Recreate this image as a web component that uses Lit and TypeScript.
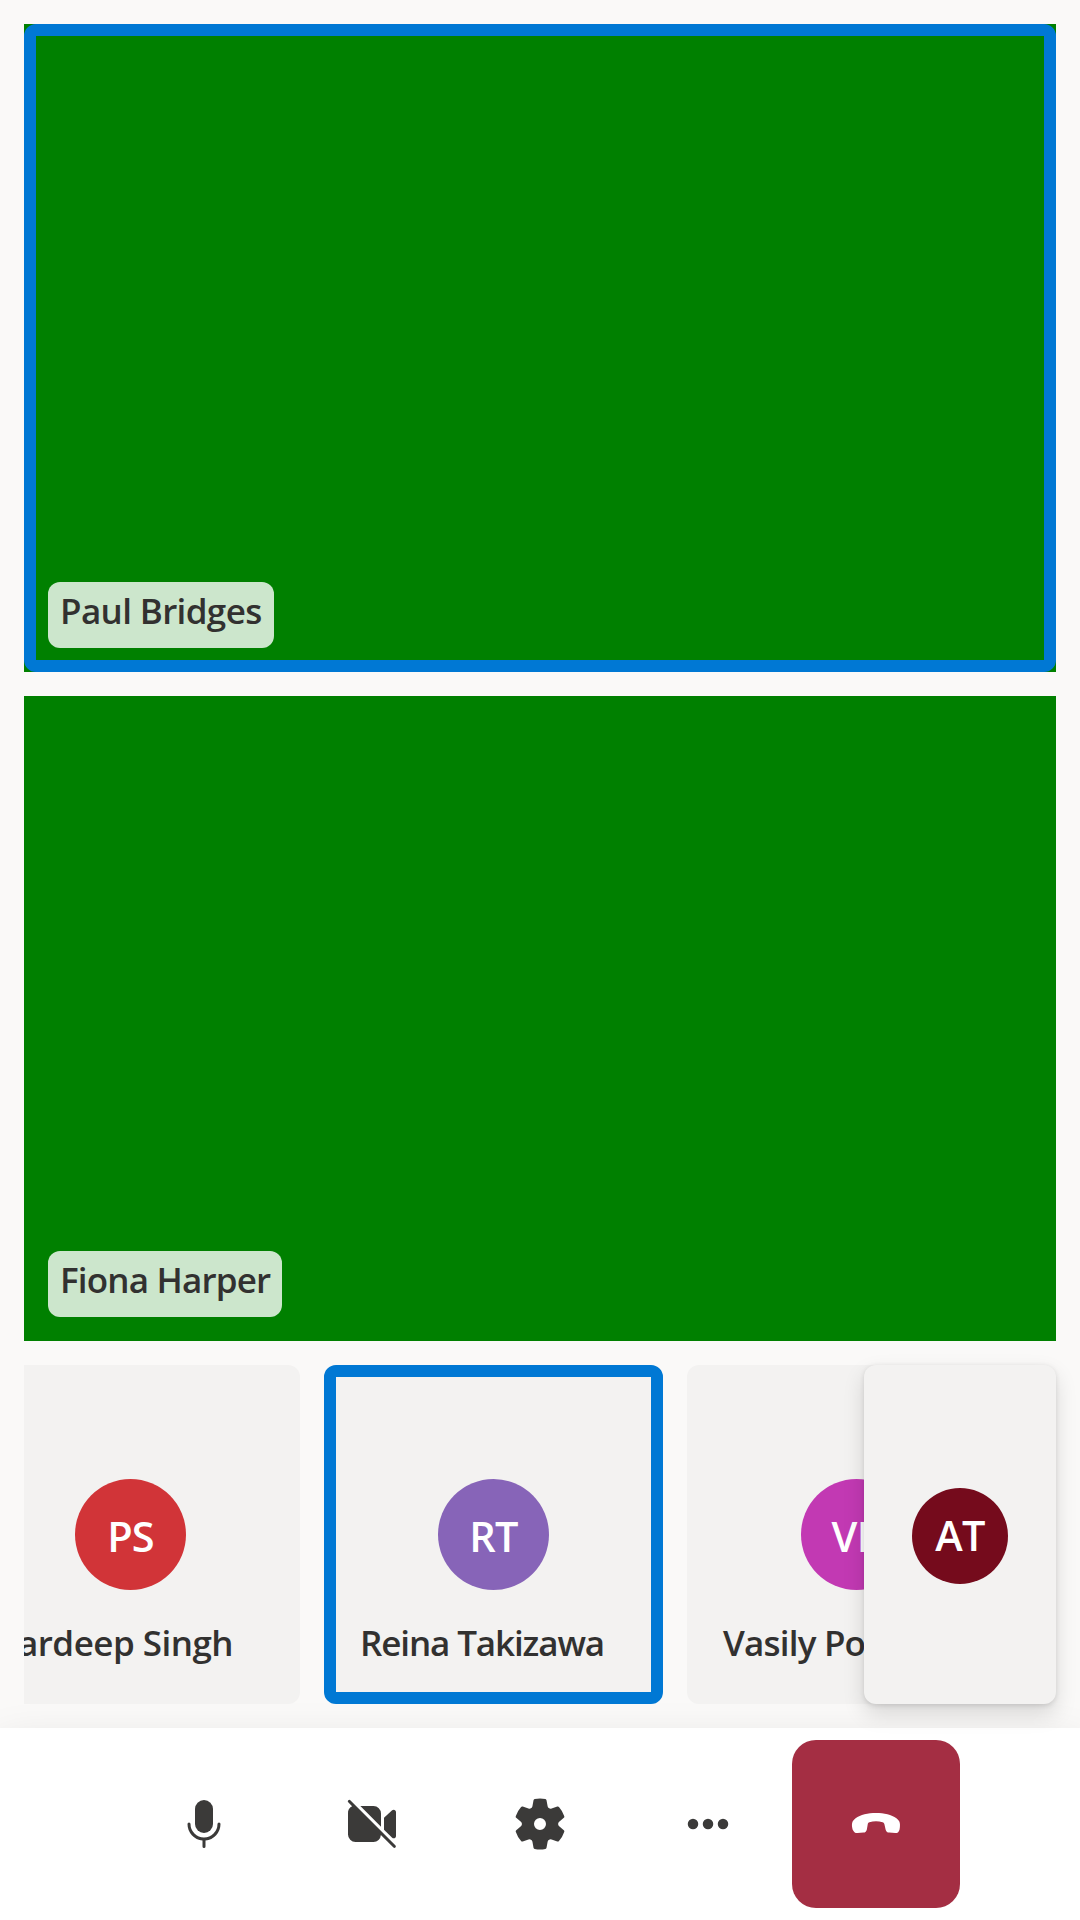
import { LitElement, html, css, svg, nothing } from "lit";
import { customElement, property } from "lit/decorators.js";
import { classMap } from "lit/directives/class-map.js";
import { styleMap } from "lit/directives/style-map.js";

const icons = {
  mic: svg`<path d="M10 13a3 3 0 0 0 3-3V5a3 3 0 0 0-6 0v5a3 3 0 0 0 3 3Z"/><path d="M5.5 10a.5.5 0 0 0-1 0 5.5 5.5 0 0 0 5 5.48v2.02a.5.5 0 0 0 1 0v-2.02a5.5 5.5 0 0 0 5-5.48.5.5 0 0 0-1 0 4.5 4.5 0 1 1-9 0Z"/>`,
  videoOff: svg`<path d="M2.85 2.15a.5.5 0 1 0-.7.7l1.22 1.22A2.5 2.5 0 0 0 2 6.5v7A2.5 2.5 0 0 0 4.5 16h6a2.5 2.5 0 0 0 2.46-2.33l4.19 4.18a.5.5 0 0 0 .7-.7l-15-15Z"/><path d="M13 6.5v4.38L6.12 4h4.38A2.5 2.5 0 0 1 13 6.5Z"/><path d="M14 7.93v3.95l2.72 2.72c.5.42 1.28.1 1.28-.6V6.02c0-.66-.74-1.03-1.28-.6L14 7.93Z"/>`,
  settings: svg`<path d="M1.91 7.38A8.5 8.5 0 0 1 3.7 4.3a.5.5 0 0 1 .54-.13l1.92.68a1 1 0 0 0 1.32-.76l.36-2a.5.5 0 0 1 .4-.4 8.53 8.53 0 0 1 3.55 0c.2.04.35.2.38.4l.37 2a1 1 0 0 0 1.32.76l1.92-.68a.5.5 0 0 1 .54.13 8.5 8.5 0 0 1 1.78 3.08c.06.2 0 .4-.15.54l-1.56 1.32a1 1 0 0 0 0 1.52l1.56 1.32a.5.5 0 0 1 .15.54 8.5 8.5 0 0 1-1.78 3.08.5.5 0 0 1-.54.13l-1.92-.68a1 1 0 0 0-1.32.76l-.37 2a.5.5 0 0 1-.38.4 8.53 8.53 0 0 1-3.56 0 .5.5 0 0 1-.39-.4l-.36-2a1 1 0 0 0-1.32-.76l-1.92.68a.5.5 0 0 1-.54-.13 8.5 8.5 0 0 1-1.78-3.08.5.5 0 0 1 .15-.54l1.56-1.32a1 1 0 0 0 0-1.52L2.06 7.92a.5.5 0 0 1-.15-.54ZM8 10a2 2 0 1 0 4 0 2 2 0 0 0-4 0Z"/>`,
  more: svg`<circle cx="5" cy="10" r="1.75"/><circle cx="10" cy="10" r="1.75"/><circle cx="15" cy="10" r="1.75"/>`,
  callEnd: svg`<path d="M2.04 11.1C1.9 9.6 2.1 9 3.2 8.1 4.8 6.95 7.3 6.33 10 6.33S15.2 6.95 16.8 8.1C17.9 9 18.1 9.6 17.96 11.1L17.85 11.8C17.65 12.65 17.2 13.05 16.4 13L14.4 12.85C13.7 12.8 13.35 12.5 13.2 11.8L12.8 10.1C12.7 9.75 12.55 9.6 12.2 9.45C11.5 9.2 10.75 9.1 10 9.1S8.5 9.2 7.8 9.45C7.45 9.6 7.3 9.75 7.25 10.1L6.95 11.8C6.8 12.5 6.45 12.8 5.8 12.85L3.85 13C3.05 13.05 2.6 12.65 2.2 11.8Z"/>`,
};

type IconName = keyof typeof icons;

interface Person {
  name: string;
  initials: string;
  tone: string;
  tracking?: number;
  speaking?: boolean;
}

const FONT = css`"Segoe UI", "Open Sans", "Noto Sans", sans-serif`;

@customElement("name-label")
class NameLabel extends LitElement {
  @property({ type: Boolean, reflect: true }) tinted = false;
  @property({ type: Number }) tracking = -0.8;

  static styles = css`
    :host {
      display: block;
      box-sizing: border-box;
      height: 66px;
      padding: 0 12px;
      border-radius: 12px;
      color: #323130;
      font: 600 35px/58px ${FONT};
      white-space: nowrap;
    }
    :host([tinted]) {
      background: rgba(255, 255, 255, 0.8);
    }
  `;

  render() {
    return html`<span style=${styleMap({ letterSpacing: `${this.tracking}px` })}><slot></slot></span>`;
  }
}

@customElement("video-tile")
class VideoTile extends LitElement {
  @property() name = "";
  @property({ type: Number }) tracking = -0.8;
  @property({ type: Boolean, reflect: true }) speaking = false;

  static styles = css`
    :host {
      display: flex;
      align-items: flex-end;
      box-sizing: border-box;
      padding: 24px;
      background: #008000;
      position: relative;
    }
    .ring {
      position: absolute;
      inset: 0;
      border: 12px solid #0078d4;
      border-radius: 12px;
    }
  `;

  render() {
    return html`
      ${this.speaking ? html`<div class="ring"></div>` : nothing}
      <name-label tinted .tracking=${this.tracking}>${this.name}</name-label>
    `;
  }
}

@customElement("person-tile")
class PersonTile extends LitElement {
  @property({ attribute: false }) person!: Person;
  @property({ type: Boolean, reflect: true }) compact = false;

  static styles = css`
    :host {
      display: block;
      flex: none;
      width: 339px;
      height: 339px;
    }
    :host([compact]) {
      width: 192px;
    }
    .tile {
      box-sizing: border-box;
      height: 100%;
      display: grid;
      grid-template-rows: 114px 111px 24px 66px;
      position: relative;
      border-radius: 12px;
      background: #f3f2f1;
    }
    .tile.compact {
      display: flex;
      align-items: center;
      justify-content: center;
      padding-top: 3px;
      box-shadow: 0 9.6px 21.6px rgba(0, 0, 0, 0.132),
        0 1.8px 5.4px rgba(0, 0, 0, 0.108);
    }
    .ring {
      position: absolute;
      inset: 0;
      border: 12px solid #0078d4;
      border-radius: 12px;
    }
    .avatar {
      grid-row: 2;
      justify-self: center;
      width: 111px;
      height: 111px;
      border-radius: 50%;
      color: #fff;
      font: 600 41.5px/114px ${FONT};
      letter-spacing: -0.8px;
      text-align: center;
    }
    .compact .avatar {
      width: 96px;
      height: 96px;
      line-height: 95px;
    }
    .red { background: #d13438; }
    .violet { background: #8764b8; }
    .magenta { background: #c239b3; }
    .maroon { background: #750b1c; }
    name-label {
      grid-row: 4;
      justify-self: start;
      margin-left: 24px;
    }
  `;

  render() {
    const p = this.person;
    return html`
      <div class=${classMap({ tile: true, compact: this.compact })}>
        ${p.speaking ? html`<div class="ring"></div>` : nothing}
        <div class="avatar ${p.tone}">${p.initials}</div>
        ${this.compact
          ? nothing
          : html`<name-label .tracking=${p.tracking ?? -0.8}>${p.name}</name-label>`}
      </div>
    `;
  }
}

@customElement("control-button")
class ControlButton extends LitElement {
  @property() icon: IconName = "mic";
  @property() label = "";
  @property({ type: Boolean, reflect: true }) danger = false;

  static styles = css`
    :host {
      display: block;
      color: #3b3a39;
    }
    button {
      display: flex;
      align-items: center;
      justify-content: center;
      width: 168px;
      height: 168px;
      padding: 0;
      border: 0;
      border-radius: 24px;
      background: transparent;
      color: inherit;
    }
    :host([danger]) {
      color: #fff;
    }
    :host([danger]) button {
      background: #a42e43;
    }
    svg {
      width: 60px;
      height: 60px;
      fill: currentColor;
    }
  `;

  render() {
    return html`<button aria-label=${this.label}>
      <svg viewBox="0 0 20 20">${icons[this.icon]}</svg>
    </button>`;
  }
}

@customElement("app-root")
class AppRoot extends LitElement {
  private people: Person[] = [
    { name: "Pardeep Singh", initials: "PS", tone: "red", tracking: -0.52 },
    { name: "Reina Takizawa", initials: "RT", tone: "violet", tracking: -1.12, speaking: true },
    { name: "Vasily Podkolzin", initials: "VP", tone: "magenta", tracking: -0.8 },
  ];
  private self: Person = { name: "", initials: "AT", tone: "maroon" };

  static styles = css`
    :host {
      display: grid;
      grid-template-rows: 1728px 192px;
      width: 1080px;
      height: 1920px;
      overflow: hidden;
      background: #faf9f8;
    }
    .stage {
      display: grid;
      grid-template-rows: 648px 645px 339px;
      gap: 24px;
      padding: 24px;
      box-sizing: border-box;
      min-width: 0;
    }
    .gallery {
      position: relative;
      min-width: 0;
      z-index: 1;
    }
    .strip {
      display: flex;
      gap: 24px;
      width: 1032px;
      overflow: hidden;
    }
    .strip person-tile:first-child {
      margin-left: -63px;
    }
    .self {
      position: absolute;
      top: 0;
      right: 0;
    }
    .bar {
      display: flex;
      align-items: center;
      justify-content: center;
      background: #fff;
      box-shadow: 0 19.2px 43.2px rgba(0, 0, 0, 0.15);
    }
  `;

  render() {
    return html`
      <main class="stage">
        <video-tile name="Paul Bridges" tracking="-0.64" speaking></video-tile>
        <video-tile name="Fiona Harper" tracking="-0.82"></video-tile>
        <section class="gallery">
          <div class="strip">
            ${this.people.map((p) => html`<person-tile .person=${p}></person-tile>`)}
          </div>
          <person-tile class="self" compact .person=${this.self}></person-tile>
        </section>
      </main>
      <nav class="bar">
        <control-button icon="mic" label="Mute"></control-button>
        <control-button icon="videoOff" label="Turn camera on"></control-button>
        <control-button icon="settings" label="Devices"></control-button>
        <control-button icon="more" label="More"></control-button>
        <control-button icon="callEnd" label="Leave" danger></control-button>
      </nav>
    `;
  }
}
